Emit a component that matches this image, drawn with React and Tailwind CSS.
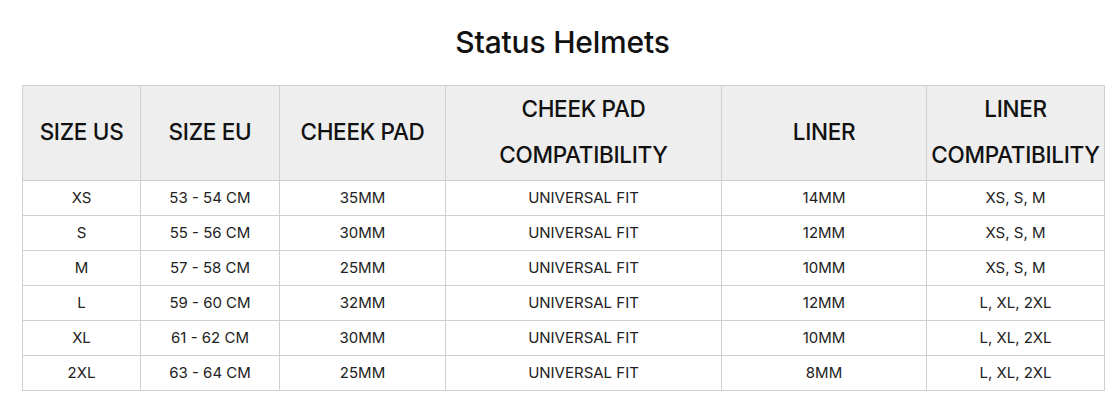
const headers = [
  ["SIZE US"],
  ["SIZE EU"],
  ["CHEEK PAD"],
  ["CHEEK PAD", "COMPATIBILITY"],
  ["LINER"],
  ["LINER", "COMPATIBILITY"],
];

const widths = ["w-[118px]", "w-[139px]", "w-[166px]", "w-[276px]", "w-[205px]", "w-[178px]"];

const rows = [
  ["XS", "53 - 54 CM", "35MM", "UNIVERSAL FIT", "14MM", "XS, S, M"],
  ["S", "55 - 56 CM", "30MM", "UNIVERSAL FIT", "12MM", "XS, S, M"],
  ["M", "57 - 58 CM", "25MM", "UNIVERSAL FIT", "10MM", "XS, S, M"],
  ["L", "59 - 60 CM", "32MM", "UNIVERSAL FIT", "12MM", "L, XL, 2XL"],
  ["XL", "61 - 62 CM", "30MM", "UNIVERSAL FIT", "10MM", "L, XL, 2XL"],
  ["2XL", "63 - 64 CM", "25MM", "UNIVERSAL FIT", "8MM", "L, XL, 2XL"],
];

const App = () => {
  return (
    <div className="bg-white w-[1120px] h-[411px] font-['Inter',sans-serif] text-[#111]">
      <h1 className="pt-[21px] pl-[5px] h-[85px] text-center text-[30px] leading-[42px] font-medium tracking-[-0.2px] text-[#111]">
        Status Helmets
      </h1>
      <table className="ml-[22px] w-[1082px] table-fixed border-collapse border border-[#d0d0d0]">
        <colgroup>
          {widths.map((w, i) => (
            <col key={i} className={w} />
          ))}
        </colgroup>
        <thead>
          <tr className="bg-[#eeeeee]">
            {headers.map((lines, i) => (
              <th
                key={i}
                className="border border-[#d0d0d0] p-0 pb-[2px] h-[94px] text-[22.5px] leading-[46px] font-medium tracking-[-0.3px] text-[#111] align-middle whitespace-nowrap"
              >
                {lines.map((l, j) => (
                  <div key={j}>{l}</div>
                ))}
              </th>
            ))}
          </tr>
        </thead>
        <tbody>
          {rows.map((row, i) => (
            <tr key={i}>
              {row.map((cell, j) => (
                <td
                  key={j}
                  className="border border-[#d0d0d0] p-0 h-[35px] text-center text-[15px] leading-[34px] text-[#222]"
                >
                  {cell}
                </td>
              ))}
            </tr>
          ))}
        </tbody>
      </table>
    </div>
  );
};

export default App;
